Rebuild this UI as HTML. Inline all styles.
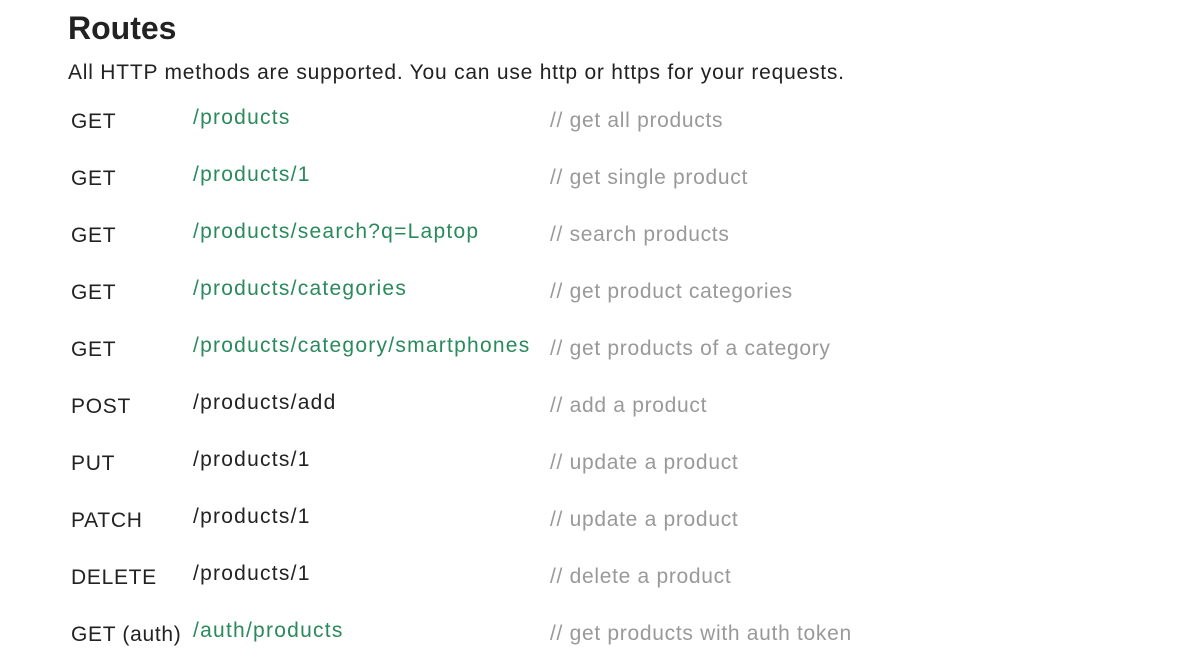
<!DOCTYPE html>
<html><head><meta charset="utf-8"><style>
body{margin:0;width:1195px;height:658px;background:#fff;font-family:"Liberation Sans",sans-serif;color:#222;position:relative;overflow:hidden}
h1{position:absolute;left:68px;top:8px;margin:0;font-size:32px;font-weight:bold;color:#222;line-height:40px}
.sub{position:absolute;left:68px;top:60px;font-size:21px;line-height:26px;white-space:nowrap;letter-spacing:0.78px}
.r{position:absolute;left:0;height:30px;width:1195px;font-size:21px;line-height:30px;white-space:nowrap;letter-spacing:0.7px}
.m{position:absolute;left:71px;top:3px}
.p{position:absolute;left:193px;top:-1px;letter-spacing:1.25px}
.g{color:#2a8a5c}
.c{position:absolute;left:550px;top:2px;color:#999}
</style></head><body>
<h1>Routes</h1>
<div class="sub">All HTTP methods are supported. You can use http or https for your requests.</div>
<div class="r" style="top:104px"><span class="m">GET</span><span class="p g">/products</span><span class="c">// get all products</span></div>
<div class="r" style="top:161px"><span class="m">GET</span><span class="p g">/products/1</span><span class="c">// get single product</span></div>
<div class="r" style="top:218px"><span class="m">GET</span><span class="p g">/products/search?q=Laptop</span><span class="c">// search products</span></div>
<div class="r" style="top:275px"><span class="m">GET</span><span class="p g">/products/categories</span><span class="c">// get product categories</span></div>
<div class="r" style="top:332px"><span class="m">GET</span><span class="p g">/products/category/smartphones</span><span class="c">// get products of a category</span></div>
<div class="r" style="top:389px"><span class="m">POST</span><span class="p">/products/add</span><span class="c">// add a product</span></div>
<div class="r" style="top:446px"><span class="m">PUT</span><span class="p">/products/1</span><span class="c">// update a product</span></div>
<div class="r" style="top:503px"><span class="m">PATCH</span><span class="p">/products/1</span><span class="c">// update a product</span></div>
<div class="r" style="top:560px"><span class="m">DELETE</span><span class="p">/products/1</span><span class="c">// delete a product</span></div>
<div class="r" style="top:617px"><span class="m">GET (auth)</span><span class="p g">/auth/products</span><span class="c">// get products with auth token</span></div>
</body></html>
